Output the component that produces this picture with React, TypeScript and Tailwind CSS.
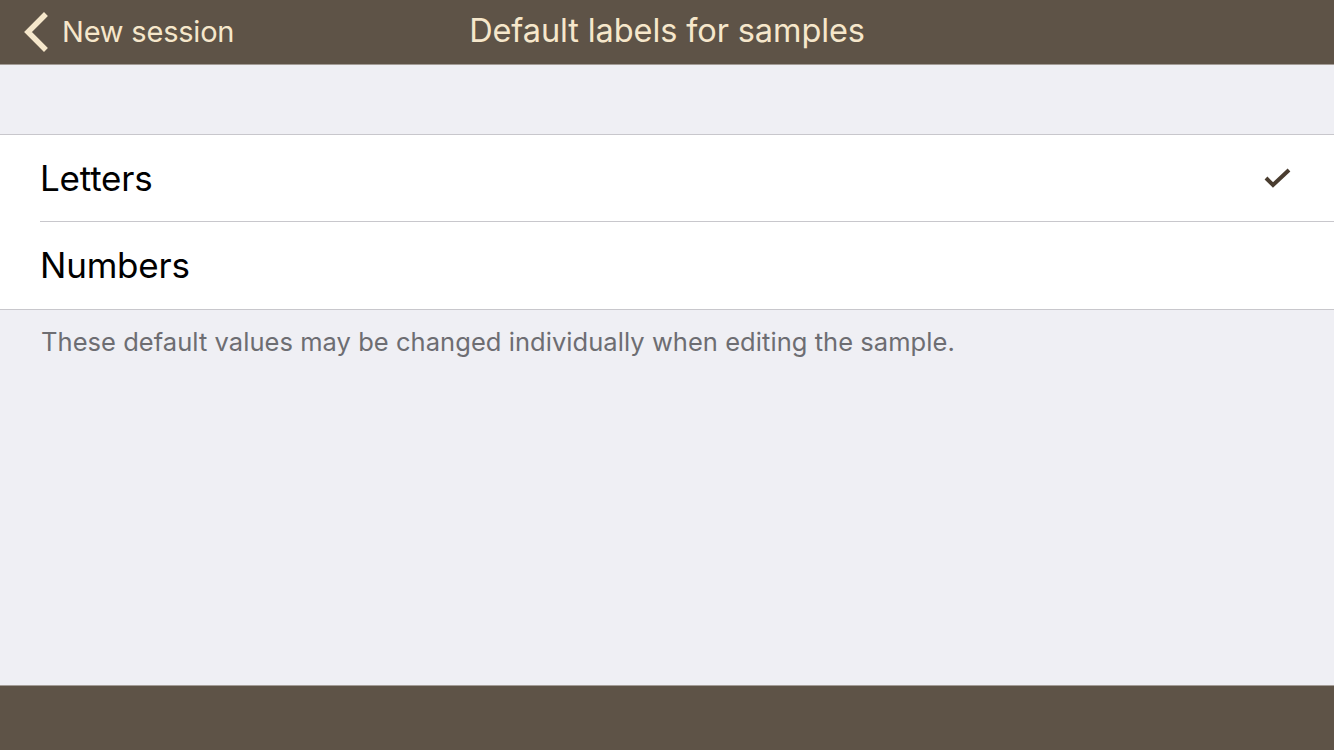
import React from 'react';

const font = { fontFamily: 'Inter, "Noto Sans", sans-serif' };

function Chevron() {
  return (
    <svg width="28" height="40" viewBox="0 0 28 40" fill="none" stroke="#f6e7cb" strokeWidth={5.5} strokeLinecap="square">
      <path d="M22 4 L6 20 L22 36" />
    </svg>
  );
}

function Row({ label, checked, last }: { label: string; checked?: boolean; last?: boolean }) {
  return (
    <div className="pl-[40px] h-[87px] flex">
      <div className={`flex-1 flex items-center justify-between pr-[42px] ${last ? '' : 'border-b border-[#c8c7cc]'}`}>
        <span className="text-[35px] text-black tracking-[-0.2px]">{label}</span>
        {checked && (
          <svg width="28" height="22" viewBox="0 0 28 22" fill="none" stroke="#4a3d30" strokeWidth={4}>
            <path d="M2 11 L9 18 L25 3" />
          </svg>
        )}
      </div>
    </div>
  );
}

export default function App() {
  return (
    <div className="w-[1334px] h-[750px] flex flex-col bg-[#efeff4] overflow-hidden" style={font}>
      <header className="h-[65px] shrink-0 bg-[#5e5347] border-b border-[#a39c96] relative flex items-center justify-center">
        <div className="absolute left-[22px] top-0 h-[64px] flex items-center gap-[12px]">
          <Chevron />
          <span className="text-[29px] text-[#f6e7cb] tracking-[-0.2px]">New session</span>
        </div>
        <h1 className="text-[32.5px] text-[#f6e7cb] tracking-[-0.1px] -mt-[1px]">Default labels for samples</h1>
      </header>
      <div className="flex-1">
        <div className="h-[69px]" />
        <div className="bg-white border-y border-[#c8c7cc]">
          <Row label="Letters" checked />
          <Row label="Numbers" last />
        </div>
        <p className="pl-[41px] pt-[13px] text-[25.5px] text-[#6d6d72] tracking-[0.05px]">
          These default values may be changed individually when editing the sample.
        </p>
      </div>
      <footer className="h-[65px] shrink-0 bg-[#5e5347] border-t border-[#a39c96]" />
    </div>
  );
}
